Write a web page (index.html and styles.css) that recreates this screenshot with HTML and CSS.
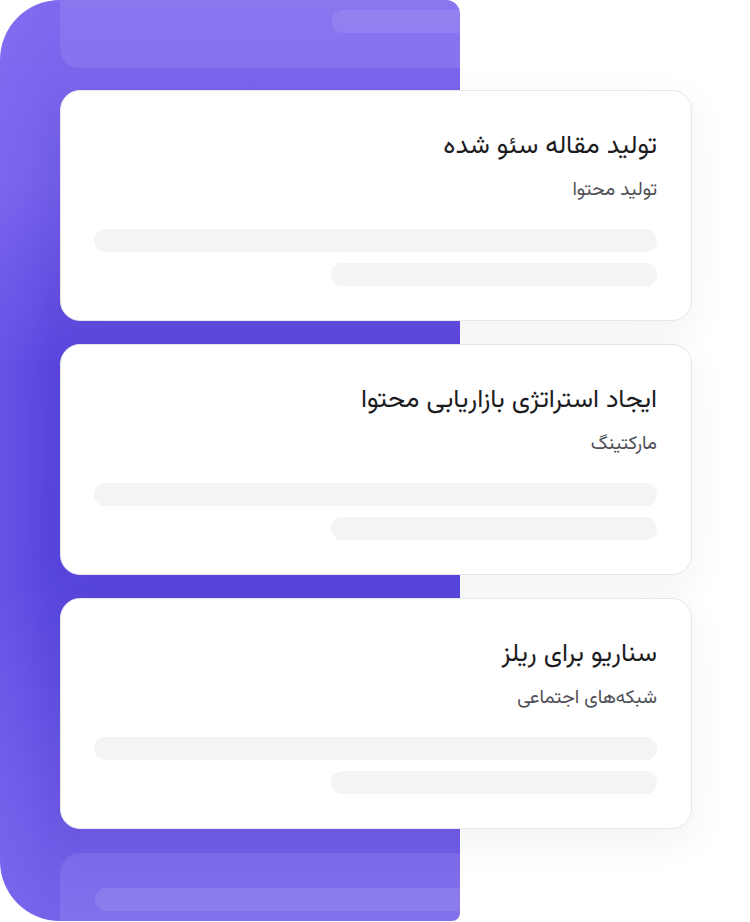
FILE: index.html
```html
<!DOCTYPE html>
<html lang="fa">
<head>
<meta charset="utf-8">
<link rel="stylesheet" href="styles.css">
</head>
<body>
<div class="stage">
  <div class="panel">
    <div class="ghost ghost-top"><div class="ghost-bar ghost-bar-top"></div></div>
    <div class="ghost ghost-bottom"><div class="ghost-bar ghost-bar-bottom"></div></div>
  </div>
  <div class="cards">
    <div class="card" dir="rtl">
      <div class="title">تولید مقاله سئو شده</div>
      <div class="subtitle">تولید محتوا</div>
      <div class="skel skel-full"></div>
      <div class="skel skel-half"></div>
    </div>
    <div class="card" dir="rtl">
      <div class="title">ایجاد استراتژی بازاریابی محتوا</div>
      <div class="subtitle">مارکتینگ</div>
      <div class="skel skel-full"></div>
      <div class="skel skel-half"></div>
    </div>
    <div class="card" dir="rtl">
      <div class="title">سناریو برای ریلز</div>
      <div class="subtitle">شبکه‌های اجتماعی</div>
      <div class="skel skel-full"></div>
      <div class="skel skel-half"></div>
    </div>
  </div>
</div>
</body>
</html>
```
FILE: styles.css
```css
* { box-sizing: border-box; }
html, body { margin: 0; padding: 0; background: #ffffff; }
body {
  width: 750px;
  height: 922px;
  overflow: hidden;
  font-family: "Vazirmatn", "Noto Sans Arabic", "DejaVu Sans", sans-serif;
}
.stage {
  display: grid;
  grid-template-columns: 750px;
  grid-template-rows: 922px;
}
.panel {
  grid-area: 1 / 1;
  width: 460px;
  height: 921px;
  border-radius: 60px 14px 8px 60px;
  background:
    linear-gradient(90deg, rgba(140,120,250,0.25) 0px, rgba(140,120,250,0) 50px),
    linear-gradient(180deg, #7e6aef 0%, #735fea 20%, #5a46de 40%, #5846de 62%, #6a57e6 85%, #7563ea 100%);
  display: flex;
  flex-direction: column;
  justify-content: space-between;
  overflow: hidden;
}
.ghost {
  margin-left: 60px;
  width: 400px;
  height: 68px;
  background: rgba(255,255,255,0.09);
}
.ghost-top {
  border-radius: 0 0 0 20px;
  padding-top: 10px;
  padding-left: 272px;
}
.ghost-bottom {
  border-radius: 20px 0 0 0;
  padding-top: 35px;
  padding-left: 35px;
}
.ghost-bar {
  height: 23px;
  background: rgba(255,255,255,0.09);
  border-radius: 12px 0 0 12px;
}
.cards {
  grid-area: 1 / 1;
  display: flex;
  flex-direction: column;
  gap: 23px;
  padding: 90px 0 0 60px;
}
.card {
  width: 632px;
  height: 231px;
  background: #ffffff;
  border: 1px solid #e6e6ec;
  border-radius: 20px;
  box-shadow: 0 12px 40px rgba(30,30,60,0.06);
  padding: 38px 34px 0 35px;
  display: flex;
  flex-direction: column;
}
.title {
  font-size: 26px;
  line-height: 36px;
  color: #1c1c1f;
  text-align: right;
}
.subtitle {
  margin-top: 12px;
  font-size: 19px;
  line-height: 28px;
  color: #505057;
  text-align: right;
}
.skel {
  height: 23px;
  border-radius: 12px;
  background: #f4f4f5;
}
.skel-full { margin-top: 24px; width: 563px; }
.skel-half { margin-top: 11px; width: 326px; }
```
